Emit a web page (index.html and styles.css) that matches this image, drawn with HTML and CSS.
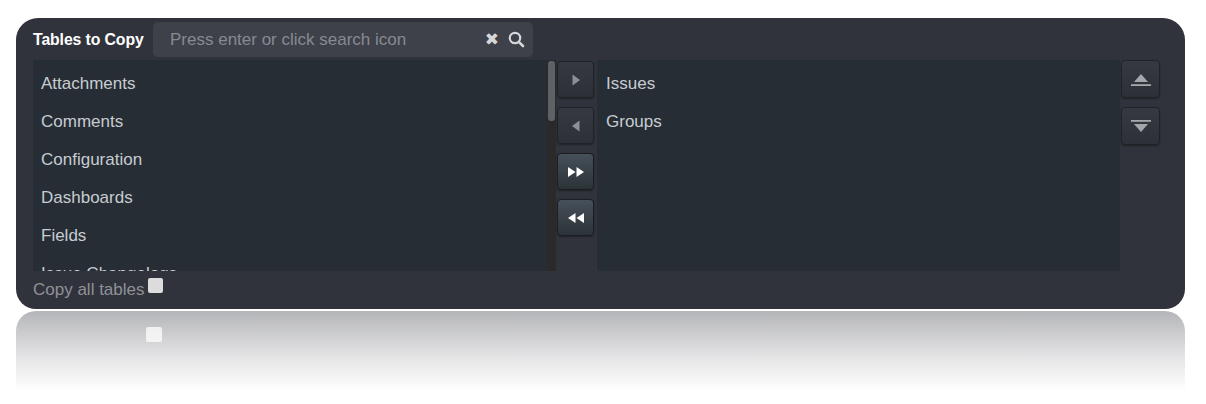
FILE: index.html
```html
<!DOCTYPE html>
<html lang="en">
<head>
<meta charset="utf-8">
<title>Tables to Copy</title>
<link rel="stylesheet" href="styles.css">
</head>
<body>
<div class="stage">
  <div class="panel">
    <div class="header">
      <span class="title">Tables to Copy</span>
      <div class="search">
        <span class="placeholder">Press enter or click search icon</span>
        <span class="clear">✖</span>
        <svg class="mag" width="17" height="17" viewBox="0 0 17 17" aria-hidden="true">
          <circle cx="7" cy="7" r="5.2" fill="none" stroke="#d6d7d9" stroke-width="2.2"/>
          <path d="M10.8 10.8 L15 15" stroke="#d6d7d9" stroke-width="2.6" stroke-linecap="round"/>
        </svg>
      </div>
    </div>
    <div class="body">
      <div class="list list-left">
        <div class="items">
          <div class="row">Attachments</div>
          <div class="row">Comments</div>
          <div class="row">Configuration</div>
          <div class="row">Dashboards</div>
          <div class="row">Fields</div>
          <div class="row">Issue Changelogs</div>
        </div>
        <div class="scrollbar"><div class="thumb"></div></div>
      </div>
      <div class="moves">
        <button class="btn off" type="button">
          <svg width="10" height="14" viewBox="0 0 10 14"><path d="M1.5 1.5 L9 7 L1.5 12.5 Z" fill="#8c8f93"/></svg>
        </button>
        <button class="btn off" type="button">
          <svg width="10" height="14" viewBox="0 0 10 14"><path d="M8.5 1.5 L1 7 L8.5 12.5 Z" fill="#8c8f93"/></svg>
        </button>
        <button class="btn on" type="button">
          <svg width="18" height="12" viewBox="0 0 18 12"><path d="M1 1 L8.5 6 L1 11 Z M9.5 1 L17 6 L9.5 11 Z" fill="#ffffff"/></svg>
        </button>
        <button class="btn on" type="button">
          <svg width="18" height="12" viewBox="0 0 18 12"><path d="M8.5 1 L1 6 L8.5 11 Z M17 1 L9.5 6 L17 11 Z" fill="#ffffff"/></svg>
        </button>
      </div>
      <div class="list list-right">
        <div class="items">
          <div class="row">Issues</div>
          <div class="row">Groups</div>
        </div>
      </div>
      <div class="order">
        <button class="btn off wide" type="button">
          <svg width="22" height="15" viewBox="0 0 22 15"><path d="M11 2 L18 10 L4 10 Z" fill="#a3a6aa"/><rect x="1" y="12.2" width="20" height="1.8" fill="#a3a6aa"/></svg>
        </button>
        <button class="btn off wide" type="button">
          <svg width="22" height="15" viewBox="0 0 22 15"><rect x="1" y="1" width="20" height="1.8" fill="#a3a6aa"/><path d="M4 5 L18 5 L11 13 Z" fill="#a3a6aa"/></svg>
        </button>
      </div>
    </div>
    <div class="footer">
      <span class="copy-label">Copy all tables</span>
      <span class="check"></span>
    </div>
  </div>
  <div class="reflection" aria-hidden="true">
    <span class="reflect-check"></span>
  </div>
</div>
</body>
</html>
```

FILE: styles.css
```css
* { box-sizing: border-box; }

html, body {
  margin: 0;
  padding: 0;
  background: #ffffff;
}

body {
  font-family: "Liberation Sans", Arial, sans-serif;
}

.stage {
  padding: 18px 0 0 16px;
  width: 1185px;
}

.panel {
  width: 1169px;
  height: 291px;
  background: #31333c;
  border-radius: 22px 22px 20px 20px;
  padding: 4px 25px 0 17px;
  display: flex;
  flex-direction: column;
}

.reflection {
  width: 1169px;
  height: 80px;
  margin-top: 2px;
  border-radius: 20px 20px 0 0;
  background: linear-gradient(to bottom, rgba(49, 51, 60, 0.36), rgba(49, 51, 60, 0.12) 60%, rgba(49, 51, 60, 0));
  padding: 16px 0 0 130px;
}

.reflect-check {
  display: block;
  width: 16px;
  height: 15px;
  border-radius: 2px;
  background: rgba(255, 255, 255, 0.75);
}

.header {
  height: 35px;
  display: flex;
  align-items: center;
  gap: 8px;
}

.title {
  color: #ffffff;
  font-weight: bold;
  font-size: 15.8px;
  width: 112px;
  white-space: nowrap;
  letter-spacing: -0.1px;
}

.search {
  width: 380px;
  height: 35px;
  background: #3e414a;
  border-radius: 5px;
  display: flex;
  align-items: center;
  padding: 0 8px 0 17px;
}

.placeholder {
  flex: 1;
  color: #878a90;
  font-size: 17px;
  white-space: nowrap;
}

.clear {
  color: #d6d7d9;
  font-size: 17px;
  line-height: 1;
  margin-right: 9px;
  font-family: "DejaVu Sans", sans-serif;
}

.mag {
  display: block;
}

.body {
  margin-top: 3px;
  height: 211px;
  display: flex;
}

.list {
  width: 523px;
  height: 211px;
  background: #262d34;
  display: flex;
  overflow: hidden;
}

.items {
  flex: 1;
  padding-top: 5px;
  overflow: hidden;
}

.scrollbar {
  width: 9px;
  background: #2a2a2b;
  padding: 1px 1px 0 1px;
}

.thumb {
  height: 60px;
  background: #5e6166;
  border-radius: 3px;
}

.row {
  height: 38px;
  line-height: 38px;
  padding-left: 8px;
  color: #c7ccd1;
  font-size: 17px;
  white-space: nowrap;
}

.list-right .items {
  padding-left: 1px;
}

.moves {
  width: 37px;
  margin: 0 3px 0 1px;
  padding-top: 1px;
  display: flex;
  flex-direction: column;
  gap: 9px;
}

.order {
  width: 39px;
  margin-left: 1px;
  padding-top: 0;
  display: flex;
  flex-direction: column;
  gap: 9px;
}

.btn {
  width: 37px;
  height: 37px;
  padding: 0;
  margin: 0;
  border: 1px solid #1f2226;
  border-radius: 4px;
  display: flex;
  align-items: center;
  justify-content: center;
  box-shadow: 0 1px 2px rgba(0, 0, 0, 0.35);
}

.btn.wide {
  width: 39px;
  height: 38px;
}

.btn svg {
  display: block;
}

.btn.off {
  background: linear-gradient(to bottom, #363941, #2d3037);
}

.btn.on {
  background: linear-gradient(to bottom, #46505a, #2c3338);
  border-color: #1a1d21;
}

.footer {
  flex: 1;
  display: flex;
  align-items: flex-start;
  padding-top: 10px;
}

.copy-label {
  color: #8e9197;
  font-size: 17px;
  line-height: 18px;
  white-space: nowrap;
}

.check {
  width: 15px;
  height: 15px;
  margin-left: 3px;
  margin-top: -3px;
  background: #dcdcdc;
  border-radius: 2px;
}
```
